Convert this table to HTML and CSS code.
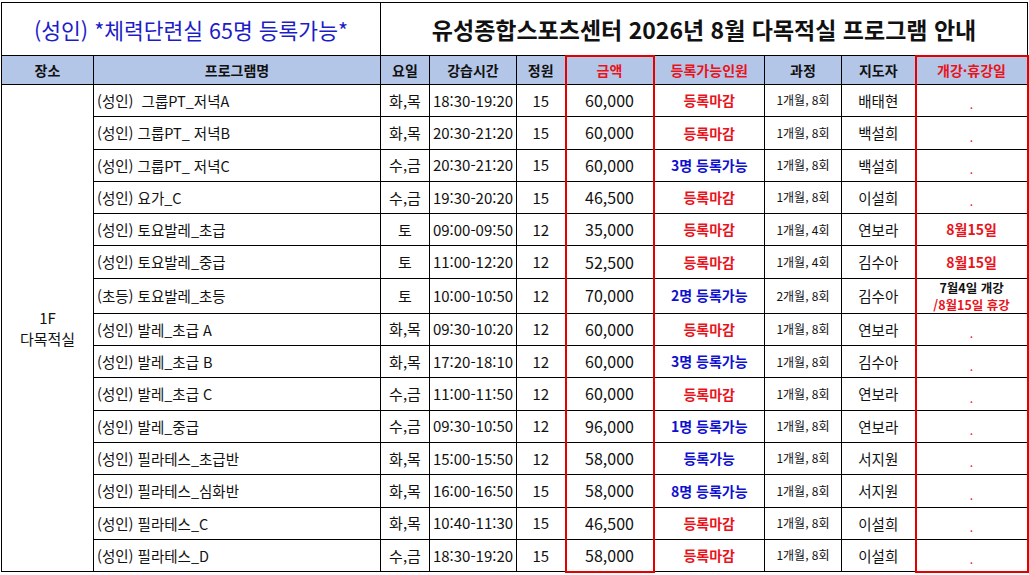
FILE: index.html
```html
<!DOCTYPE html>
<html lang="ko">
<head>
<meta charset="utf-8">
<title>유성종합스포츠센터 2026년 8월 다목적실 프로그램 안내</title>
<link rel="stylesheet" href="styles.css">
</head>
<body>
<table class="sheet">
  <colgroup>
    <col class="c-place"><col class="c-name"><col class="c-day"><col class="c-time"><col class="c-cap">
    <col class="c-fee"><col class="c-avail"><col class="c-course"><col class="c-teacher"><col class="c-date">
  </colgroup>
  <tr class="r-title">
    <td colspan="2" class="sub-title">(성인) *체력단련실 65명 등록가능*</td>
    <td colspan="8" class="main-title">유성종합스포츠센터 2026년 8월 다목적실 프로그램 안내</td>
  </tr>
  <tr class="r-head">
    <th>장소</th><th>프로그램명</th><th>요일</th><th>강습시간</th><th>정원</th>
    <th class="fee red">금액</th><th class="red">등록가능인원</th><th>과정</th><th>지도자</th><th class="date red">개강·휴강일</th>
  </tr>
  <tr>
    <td rowspan="15" class="place"><span class="line">1F</span><span class="line">다목적실</span></td>
    <td class="name">(성인)&nbsp; 그룹PT_저녁A</td><td>화,목</td><td class="time">18:30-19:20</td><td>15</td>
    <td class="fee">60,000</td><td class="st closed">등록마감</td><td class="course">1개월, 8회</td><td class="teacher">배태현</td><td class="date dot">.</td>
  </tr>
  <tr>
    <td class="name">(성인) 그룹PT_ 저녁B</td><td>화,목</td><td class="time">20:30-21:20</td><td>15</td>
    <td class="fee">60,000</td><td class="st closed">등록마감</td><td class="course">1개월, 8회</td><td class="teacher">백설희</td><td class="date dot">.</td>
  </tr>
  <tr>
    <td class="name">(성인) 그룹PT_ 저녁C</td><td>수,금</td><td class="time">20:30-21:20</td><td>15</td>
    <td class="fee">60,000</td><td class="st open">3명 등록가능</td><td class="course">1개월, 8회</td><td class="teacher">백설희</td><td class="date dot">.</td>
  </tr>
  <tr>
    <td class="name">(성인) 요가_C</td><td>수,금</td><td class="time">19:30-20:20</td><td>15</td>
    <td class="fee">46,500</td><td class="st closed">등록마감</td><td class="course">1개월, 8회</td><td class="teacher">이설희</td><td class="date dot">.</td>
  </tr>
  <tr>
    <td class="name">(성인) 토요발레_초급</td><td>토</td><td class="time">09:00-09:50</td><td>12</td>
    <td class="fee">35,000</td><td class="st closed">등록마감</td><td class="course">1개월, 4회</td><td class="teacher">연보라</td><td class="date hol">8월15일</td>
  </tr>
  <tr>
    <td class="name">(성인) 토요발레_중급</td><td>토</td><td class="time">11:00-12:20</td><td>12</td>
    <td class="fee">52,500</td><td class="st closed">등록마감</td><td class="course">1개월, 4회</td><td class="teacher">김수아</td><td class="date hol">8월15일</td>
  </tr>
  <tr class="r-tall">
    <td class="name">(초등) 토요발레_초등</td><td>토</td><td class="time">10:00-10:50</td><td>12</td>
    <td class="fee">70,000</td><td class="st open">2명 등록가능</td><td class="course">2개월, 8회</td><td class="teacher">김수아</td>
    <td class="date two"><span class="line start">7월4일 개강</span><span class="line stop">/8월15일 휴강</span></td>
  </tr>
  <tr>
    <td class="name">(성인) 발레_초급 A</td><td>화,목</td><td class="time">09:30-10:20</td><td>12</td>
    <td class="fee">60,000</td><td class="st closed">등록마감</td><td class="course">1개월, 8회</td><td class="teacher">연보라</td><td class="date dot">.</td>
  </tr>
  <tr>
    <td class="name">(성인) 발레_초급 B</td><td>화,목</td><td class="time">17:20-18:10</td><td>12</td>
    <td class="fee">60,000</td><td class="st open">3명 등록가능</td><td class="course">1개월, 8회</td><td class="teacher">김수아</td><td class="date dot">.</td>
  </tr>
  <tr>
    <td class="name">(성인) 발레_초급 C</td><td>수,금</td><td class="time">11:00-11:50</td><td>12</td>
    <td class="fee">60,000</td><td class="st closed">등록마감</td><td class="course">1개월, 8회</td><td class="teacher">연보라</td><td class="date dot">.</td>
  </tr>
  <tr>
    <td class="name">(성인) 발레_중급</td><td>수,금</td><td class="time">09:30-10:50</td><td>12</td>
    <td class="fee">96,000</td><td class="st open">1명 등록가능</td><td class="course">1개월, 8회</td><td class="teacher">연보라</td><td class="date dot">.</td>
  </tr>
  <tr>
    <td class="name">(성인) 필라테스_초급반</td><td>화,목</td><td class="time">15:00-15:50</td><td>12</td>
    <td class="fee">58,000</td><td class="st open">등록가능</td><td class="course">1개월, 8회</td><td class="teacher">서지원</td><td class="date dot">.</td>
  </tr>
  <tr>
    <td class="name">(성인) 필라테스_심화반</td><td>화,목</td><td class="time">16:00-16:50</td><td>15</td>
    <td class="fee">58,000</td><td class="st open">8명 등록가능</td><td class="course">1개월, 8회</td><td class="teacher">서지원</td><td class="date dot">.</td>
  </tr>
  <tr>
    <td class="name">(성인) 필라테스_C</td><td>화,목</td><td class="time">10:40-11:30</td><td>15</td>
    <td class="fee">46,500</td><td class="st closed">등록마감</td><td class="course">1개월, 8회</td><td class="teacher">이설희</td><td class="date dot">.</td>
  </tr>
  <tr class="r-last">
    <td class="name">(성인) 필라테스_D</td><td>수,금</td><td class="time">18:30-19:20</td><td>15</td>
    <td class="fee">58,000</td><td class="st closed">등록마감</td><td class="course">1개월, 8회</td><td class="teacher">이설희</td><td class="date dot">.</td>
  </tr>
</table>
</body>
</html>
```
FILE: styles.css
```css
html, body {
  margin: 0;
  padding: 0;
  background: #ffffff;
}

body {
  font-family: "Noto Sans CJK KR", "Noto Sans", sans-serif;
  color: #111111;
  padding: 2px 0 0 1px;
}

.sheet {
  border-collapse: collapse;
  table-layout: fixed;
  width: 1027px;
}

.c-place { width: 92px; }
.c-name { width: 287px; }
.c-day { width: 49px; }
.c-time { width: 87px; }
.c-cap { width: 49px; }
.c-fee { width: 88px; }
.c-avail { width: 111px; }
.c-course { width: 77px; }
.c-teacher { width: 74px; }
.c-date { width: 112px; }

.sheet td,
.sheet th {
  border: 1px solid #000000;
  padding: 0;
  text-align: center;
  vertical-align: middle;
  font-size: 15px;
  font-weight: 400;
  line-height: 1.2;
  white-space: nowrap;
  overflow: hidden;
}

.sheet tr { height: 32.3px; }
.sheet tr.r-title { height: 53px; }
.sheet tr.r-head { height: 29px; }
.sheet tr.r-tall { height: 35px; }

.sheet td.sub-title {
  color: #1c1cc8;
  font-size: 21.5px;
  font-weight: 400;
  padding-top: 2px;
}

.sheet td.main-title {
  color: #111111;
  font-size: 23px;
  font-weight: 700;
  padding-top: 2px;
}

.sheet .r-head th {
  background: #b4c6e7;
  font-size: 14px;
  font-weight: 700;
  color: #111111;
}

.sheet .r-head th.red { color: #e8141c; }

.sheet td.place {
  font-size: 15px;
  line-height: 21px;
}

.sheet td.name {
  text-align: left;
  padding-left: 3px;
  font-size: 14.5px;
}

.sheet td.fee { font-size: 16px; }

.sheet .fee,
.sheet .date {
  border-left: 2px solid #e50000;
  border-right: 2px solid #e50000;
}

.sheet .r-head .fee,
.sheet .r-head .date { border-top: 2px solid #e50000; }

.sheet .r-last .fee,
.sheet .r-last .date { border-bottom: 2px solid #e50000; }

.sheet td.st {
  font-size: 14px;
  font-weight: 700;
}

.sheet td.closed { color: #e8141c; }
.sheet td.open { color: #1010d0; }

.sheet td.course { font-size: 12px; }
.sheet td.teacher { font-size: 14.5px; }

.sheet td.dot {
  color: #e8141c;
  font-size: 12px;
  padding-top: 8px;
}

.sheet td.hol {
  color: #e8141c;
  font-size: 14px;
  font-weight: 700;
}

.sheet td.two {
  font-size: 12.5px;
  font-weight: 700;
  line-height: 17px;
}

.line { display: block; }
.start { color: #111111; }
.stop { color: #e8141c; }
```
